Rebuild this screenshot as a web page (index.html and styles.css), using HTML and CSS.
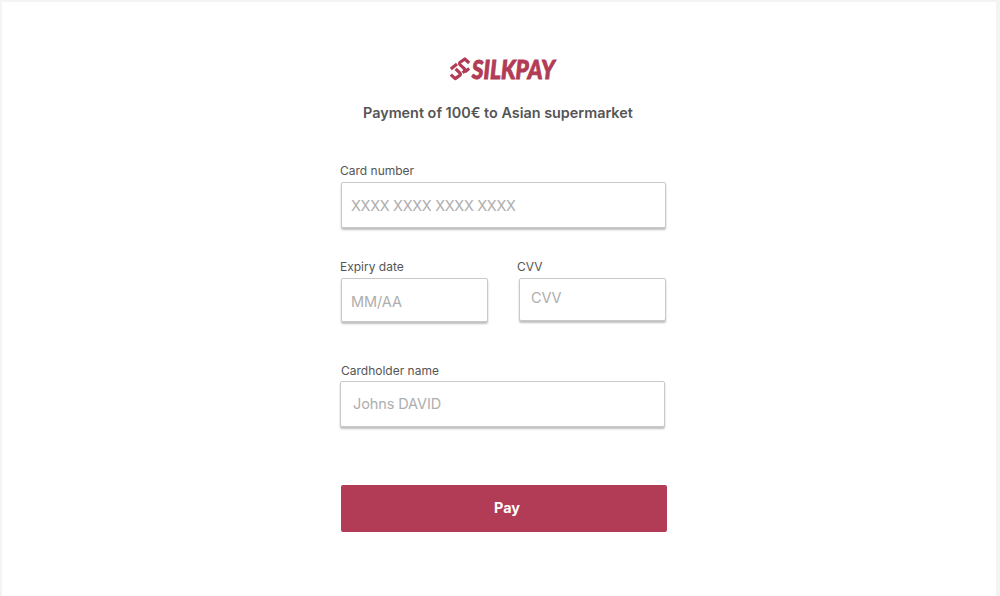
FILE: index.html
```
<!DOCTYPE html>
<html lang="en">
<head>
<meta charset="utf-8">
<title>Silkpay</title>
<link rel="stylesheet" href="styles.css">
</head>
<body>
<div class="page">
	<form class="payment">
		<svg class="logo" width="116" height="32" viewBox="0 0 116 32" role="img" aria-label="Silkpay">
			<g fill="none" stroke="#b23c56" stroke-width="3.2" stroke-linejoin="round">
				<path d="M20.2 9L15.8 5L11.2 8.2Q9.8 9.4 11.2 10.8L15 14.4Q16.6 16 15 17.6L13.6 18.8"/>
				<path d="M1.8 20.6L6.2 24.6L10.8 21.4Q12.2 20.2 10.8 18.8L6.6 14.8"/>
				<path d="M1.8 15L8 10"/>
				<path d="M15.8 18L20.2 14.6"/>
			</g>
			<text class="logo_text" x="22.8" y="25" textLength="83" lengthAdjust="spacingAndGlyphs">SILKPAY</text>
		</svg>
		<h1 class="title">Payment of 100€ to Asian supermarket</h1>

		<div class="field field_card">
			<label for="card">Card number</label>
			<input id="card" type="text" placeholder="XXXX XXXX XXXX XXXX">
		</div>

		<div class="row">
			<div class="field field_expiry">
				<label for="expiry">Expiry date</label>
				<input id="expiry" type="text" placeholder="MM/AA">
			</div>
			<div class="field field_cvv">
				<label for="cvv">CVV</label>
				<input id="cvv" type="text" placeholder="CVV">
			</div>
		</div>

		<div class="field field_name">
			<label for="name">Cardholder name</label>
			<input id="name" type="text" placeholder="Johns DAVID">
		</div>

		<button class="pay" type="button">Pay</button>
	</form>
</div>
</body>
</html>
```

FILE: styles.css
```
* {margin: 0; padding: 0; box-sizing: border-box;}
body {background: #fff; font-family: Inter, "Liberation Sans", sans-serif; color: #555;}

.page {height: 596px; border: solid #f4f4f4; border-width: 2px 4px 0 2px; overflow: hidden;}
.payment {width: 327px; margin-left: 338px; padding-top: 52px;}

.logo {display: block; margin-left: 109px; overflow: visible;}
.logo_text {font-family: Lato, sans-serif; font-size: 26px; font-weight: 900; font-style: italic; fill: #b23c56; stroke: #b23c56; stroke-width: 0.9px;}
.title {margin: 17px 0 0 23px; font-size: 14.4px; line-height: 20px; font-weight: 600; white-space: nowrap;}

.field {display: flex; flex-direction: column;}
.field label {font-size: 12px; line-height: 16px; height: 19px;}
.field input {
	width: 100%;
	border: 1px solid #c9c9c9;
	border-radius: 2px;
	background: #fff;
	box-shadow: 0 2px 2px rgba(0,0,0,0.25);
	font-family: inherit;
	font-size: 14.5px;
	letter-spacing: -0.1px;
	color: #555;
}
.field input::placeholder {color: #aeaeae; opacity: 1;}

.field_card {margin-top: 40px;}
.field_card input {width: 325px; height: 46px; margin-left: 1px; padding-left: 9px; letter-spacing: -0.31px;}

.row {display: flex; gap: 29px; margin-top: 31px;}
.field_expiry {width: 148px;}
.field_expiry input {width: 147px; height: 44px; margin-left: 1px; padding: 3px 0 0 9px;}
.field_cvv {width: 149px;}
.field_cvv input {width: 147px; height: 43px; margin-left: 2px; padding: 0 0 4px 11px;}

.field_name {margin-top: 41px;}
.field_name label {height: 18px; padding-left: 1px;}
.field_name input {width: 325px; height: 46px; padding: 0 0 1px 12px;}

.pay {
	display: block;
	width: 326px;
	height: 47px;
	margin: 58px 0 0 1px;
	padding: 0 0 2px 6px;
	border: 0;
	border-radius: 2px;
	background: #b23c56;
	color: #fff;
	font-family: inherit;
	font-size: 14.4px;
	font-weight: 700;
}
```
